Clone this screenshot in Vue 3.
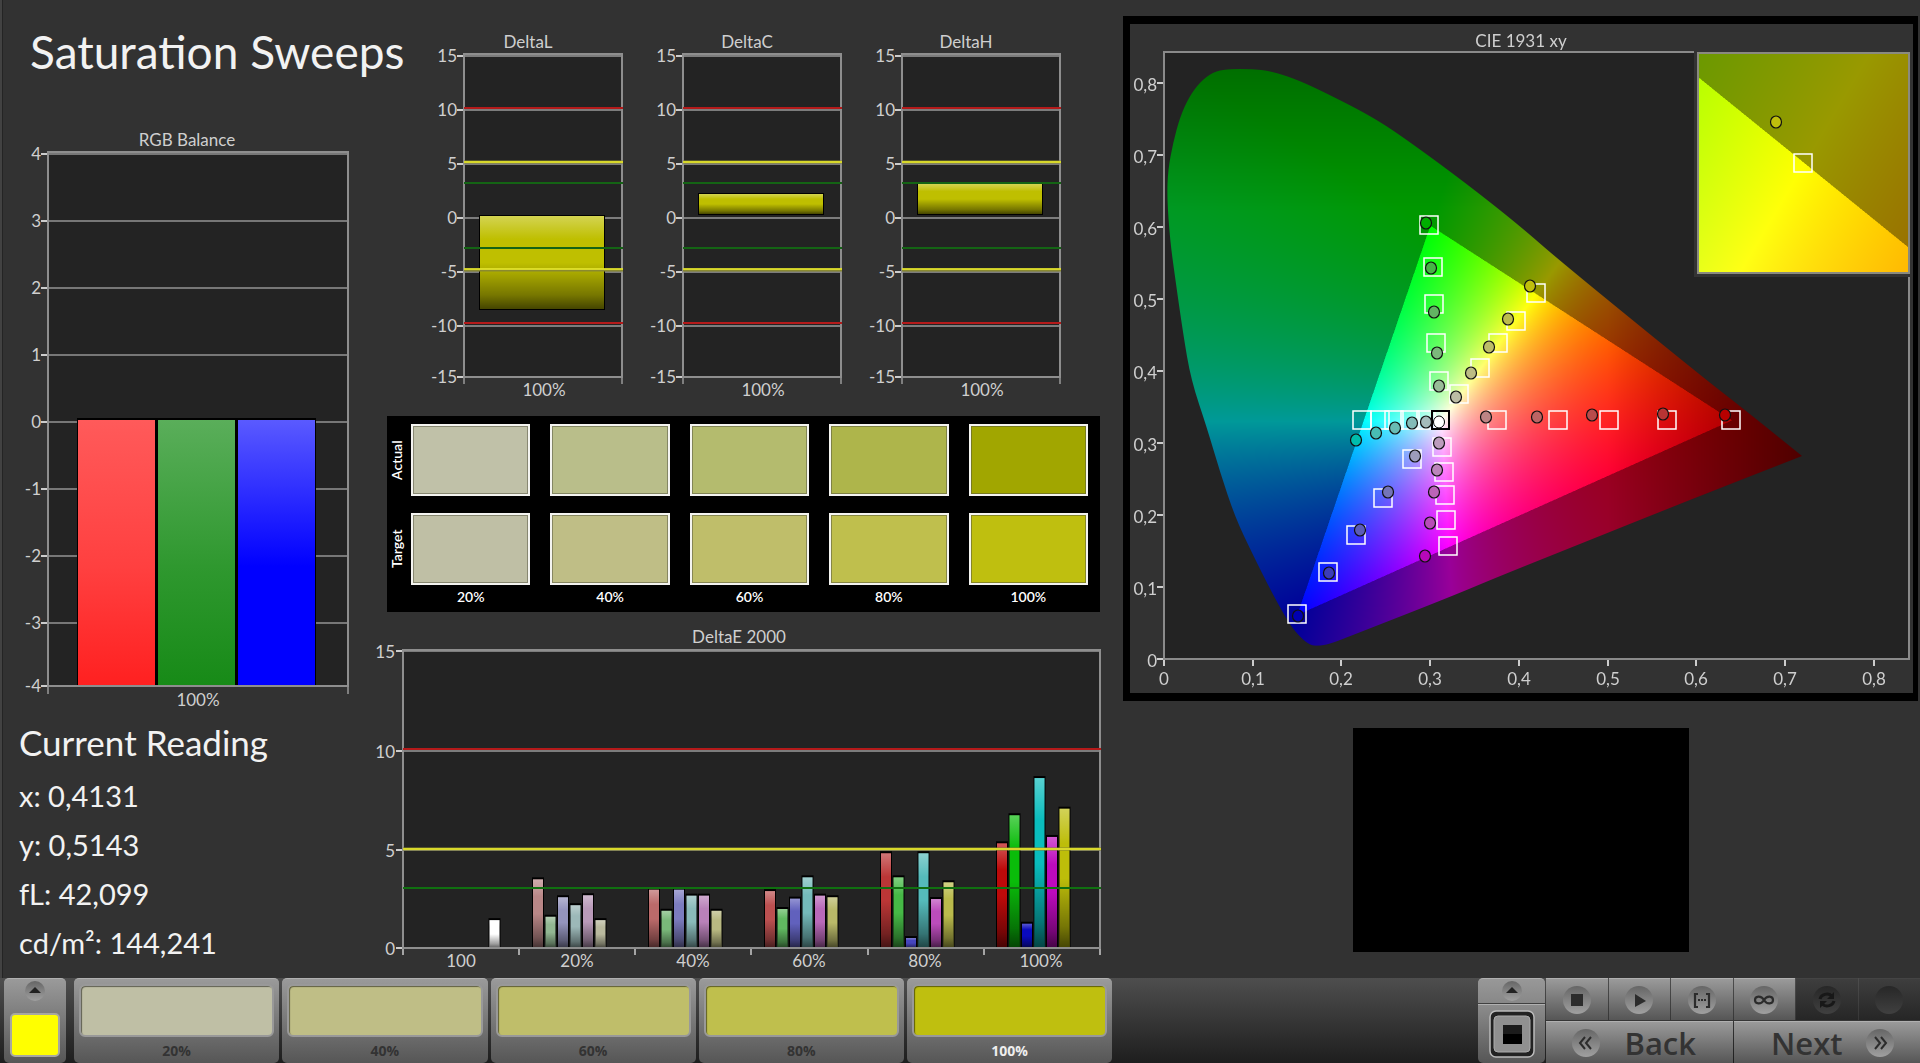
<script setup>
import { onMounted, ref } from 'vue'

/* RGB balance */
const rgbTicks = [4, 3, 2, 1, 0, -1, -2, -3, -4].map((v, i) => ({ v, y: i === 8 ? 562 : 30 + i * 67 }))
const rgbBars = [
  { x: 77, from: '#ff5a5a', mid: '#ff4040', to: '#ff2020' },
  { x: 157, from: '#5aae5a', mid: '#2f982f', to: '#178a17' },
  { x: 237, from: '#5a5aff', mid: '#0000ff', to: '#0000ff' },
]

/* Delta L / C / H */
const deltaTicks = [15, 10, 5, 0, -5, -10, -15].map((v, i) => ({ v, y: i === 6 ? 349 : 28 + i * 54 }))
const deltaCharts = [
  { title: 'DeltaL', top: 187, height: 95 },
  { title: 'DeltaC', top: 165, height: 22 },
  { title: 'DeltaH', top: 155, height: 32 },
]

/* Swatches */
const levels = ['20%', '40%', '60%', '80%', '100%']
const actual = ['#c0c1a8', '#b9be8a', '#b4bb6e', '#aeb54b', '#a1a600']
const target = ['#bfbfa5', '#bfbe86', '#bfbe6a', '#bfbf4d', '#bfbf0f']

/* Delta E 2000 */
const groups = [
  { label: '100', values: [[5.8, 1.5, '#ffffff']] },
  { label: '20%', values: [[0, 3.55, '#b98787'], [1, 1.67, '#92b792'], [2, 2.65, '#9494bd'], [3, 2.25, '#9cb8b8'], [4, 2.75, '#b99ab9'], [5, 1.5, '#b9b99e']] },
  { label: '40%', values: [[0, 3.03, '#bb6a6a'], [1, 1.97, '#7ab87a'], [2, 3.03, '#7c7cbf'], [3, 2.73, '#8ababa'], [4, 2.73, '#b981b9'], [5, 1.97, '#b9b982']] },
  { label: '60%', values: [[0, 2.96, '#bb5050'], [1, 2.06, '#60b860'], [2, 2.58, '#6161bd'], [3, 3.65, '#74baba'], [4, 2.73, '#b969b9'], [5, 2.65, '#b9b969']] },
  { label: '80%', values: [[0, 4.86, '#bb3636'], [1, 3.65, '#46b946'], [2, 0.6, '#4646be'], [3, 4.86, '#55bbbb'], [4, 2.56, '#bb4cbb'], [5, 3.4, '#bbbb4c']] },
  { label: '100%', values: [[0, 5.36, '#bd0a0a'], [1, 6.77, '#0abc0a'], [2, 1.32, '#0a0abd'], [3, 8.64, '#0abdbd'], [4, 5.68, '#bd0abd'], [5, 7.1, '#bdbd0a']] },
]
const eBars = groups.flatMap((g, k) =>
  g.values.map(([slot, v, color]) => ({ x: 41 + 116 * k + slot * 12.5, y: 328 - v * 19.9, h: v * 19.9, color }))
)
const eTicks = [[15, 31], [10, 131], [5, 230], [0, 328]]

/* CIE chart: marker positions on the 783 x 669 drawing */
const targets = [
  [299, 201], [303, 243], [304, 280], [306, 319], [309, 357],
  [406, 269], [386, 297], [368, 319], [350, 344], [329, 370],
  [367, 396], [428, 396], [479, 396], [537, 396], [601, 396],
  [232, 396], [250, 396], [264, 396], [280, 396], [296, 396],
  [312, 423], [314, 448], [315, 471], [316, 496], [318, 522],
  [282, 435], [253, 474], [226, 511], [198, 548], [167, 590],
  [673, 139],
]
const readings = [
  [296, 199, '#00ae00'], [301, 244, '#46b446'], [304, 288, '#62b462'], [307, 329, '#7cb87c'], [309, 362, '#98bc98'],
  [400, 262, '#bfbf0c'], [378, 295, '#bcbc4c'], [359, 323, '#bcbc68'], [341, 349, '#bcbc84'], [326, 373, '#bcbca4'],
  [356, 393, '#bc8484'], [407, 393, '#bc6464'], [462, 391, '#b84c4c'], [533, 390, '#b83434'], [595, 391, '#b80000'],
  [296, 398, '#a4bcbc'], [282, 399, '#84bcb8'], [265, 404, '#68bcb4'], [246, 409, '#48bcb4'], [226, 416, '#00bcac'],
  [309, 419, '#bc9cbc'], [307, 446, '#bc84bc'], [304, 468, '#bc64b8'], [300, 499, '#b84cb8'], [295, 532, '#b808b8'],
  [285, 432, '#9c9cbc'], [258, 468, '#7474b8'], [230, 506, '#5c5cb8'], [199, 549, '#3c3cb8'], [168, 592, '#0000b0'],
  [646, 98, '#bfbf0c'],
]
const xAxis = [0, 1, 2, 3, 4, 5, 6, 7, 8].map((n) => ({ label: n ? '0,' + n : '0', p: Math.round(34 + n * 88.7) }))
const yAxis = [0, 1, 2, 3, 4, 5, 6, 7, 8].map((n) => ({ label: n ? '0,' + n : '0', p: Math.round(635 - n * 72) }))

const locus = [
  [97, 45], [123, 45], [140, 47], [163, 54], [190, 66], [243, 93], [280, 118], [337, 160], [390, 202],
  [430, 237], [570, 351], [615, 386], [672, 432], [557, 477], [440, 524], [370, 552], [320, 573], [223, 611],
  [200, 620], [188, 622], [180, 621], [171, 614], [160, 601], [142, 569], [122, 529], [105, 493], [90, 448],
  [77, 404], [61, 356], [53, 309], [45, 253], [40, 216], [37, 173], [38, 146], [43, 119], [50, 93], [59, 73],
  [70, 58], [83, 48],
]

const gamut = ref(null)

function chroma(x, y) {
  if (y < 0.002) y = 0.002
  const X = x / y
  const Z = (1 - x - y) / y
  let r = 3.2406 * X - 1.5372 - 0.4986 * Z
  let g = -0.9689 * X + 1.8758 + 0.0415 * Z
  let b = 0.0557 * X - 0.204 + 1.057 * Z
  let k = Math.min(r, g, b) < 0 ? 0.6 : 1
  if (x > 0.5) k *= 1 - (x - 0.5) * 2.2
  if (y > 0.62) k *= 1 - (y - 0.62) * 1.4
  r = Math.max(r, 0)
  g = Math.max(g, 0)
  b = Math.max(b, 0)
  k *= 255 / Math.max(r, g, b)
  return [r * k, g * k, b * k]
}

function shade(w, h, toXY) {
  const c = document.createElement('canvas')
  c.width = w
  c.height = h
  const ctx = c.getContext('2d')
  const img = ctx.createImageData(w, h)
  for (let j = 0; j < h; j++) {
    for (let i = 0; i < w; i++) {
      const [x, y] = toXY(i / 2, j / 2)
      const [r, g, b] = chroma(x, y)
      const o = (j * w + i) * 4
      img.data[o] = r
      img.data[o + 1] = g
      img.data[o + 2] = b
      img.data[o + 3] = 255
    }
  }
  ctx.putImageData(img, 0, 0)
  return c
}

onMounted(() => {
  const ctx = gamut.value.getContext('2d')
  ctx.scale(2, 2)
  ctx.fillStyle = '#232323'
  ctx.fillRect(34, 28, 745, 607)

  ctx.save()
  ctx.beginPath()
  const n = locus.length
  const mid = (a, b) => [(a[0] + b[0]) / 2, (a[1] + b[1]) / 2]
  ctx.moveTo(...mid(locus[n - 1], locus[0]))
  for (let i = 0; i < n; i++) {
    const p = locus[i]
    const m = mid(p, locus[(i + 1) % n])
    if (p[0] === 672) {
      ctx.lineTo(...p)
      ctx.lineTo(...m)
    } else {
      ctx.quadraticCurveTo(...p, ...m)
    }
  }
  ctx.clip()
  ctx.drawImage(shade(1490, 1214, (px, py) => [px / 887, (606 - py) / 721]), 34, 28, 745, 607)
  ctx.restore()

  ctx.fillStyle = '#333333'
  ctx.fillRect(564, 26, 219, 227)
  ctx.drawImage(
    shade(422, 440, (px, py) => [0.419 + (px - 105) / 4460, 0.5055 - (py - 109) / 4550]),
    568, 29, 211, 220
  )
})
</script>

<template>
  <div class="shell">
    <main class="report">
      <section class="col-left">
        <h1>Saturation Sweeps</h1>
        <svg class="chart" viewBox="0 0 375 590" role="img" aria-label="RGB Balance">
          <defs>
            <linearGradient v-for="(b, i) in rgbBars" :id="'rgb' + i" :key="i" x1="0" y1="0" x2="0" y2="1">
              <stop offset="0" :stop-color="b.from" />
              <stop offset="0.55" :stop-color="b.mid" />
              <stop offset="1" :stop-color="b.to" />
            </linearGradient>
          </defs>
          <text x="187" y="22" text-anchor="middle">RGB Balance</text>
          <rect x="48" y="28" width="300" height="534" fill="#232323" />
          <g v-for="t in rgbTicks" :key="t.v">
            <path :d="`M48 ${t.y}H348`" stroke="#777" stroke-width="2" />
            <path :d="`M41 ${t.y}H47`" stroke="#ccc" stroke-width="2" />
            <text x="41" :y="t.y + 6" text-anchor="end">{{ t.v }}</text>
          </g>
          <rect x="77" y="294" width="239" height="268" fill="#000" />
          <rect v-for="(b, i) in rgbBars" :key="b.x" :x="b.x + 1" y="296" width="77" height="266" :fill="`url(#rgb${i})`" />
          <rect x="48" y="28" width="300" height="534" fill="none" stroke="#8e8e8e" stroke-width="2" />
          <path d="M48 563V570M348 563V570" stroke="#ccc" stroke-width="1" />
          <text x="198" y="582" text-anchor="middle">100%</text>
        </svg>
        <div class="reading">
          <h2>Current Reading</h2>
          <p>x: 0,4131</p>
          <p>y: 0,5143</p>
          <p>fL: 42,099</p>
          <p>cd/m²: 144,241</p>
        </div>
      </section>

      <section class="col-mid">
        <div class="deltas">
          <svg v-for="c in deltaCharts" :key="c.title" class="chart" viewBox="0 0 219 378" role="img" :aria-label="c.title">
            <defs>
              <linearGradient id="gloss" x1="0" y1="0" x2="0" y2="1">
                <stop offset="0" stop-color="#fff" stop-opacity="0.32" />
                <stop offset="0.25" stop-color="#fff" stop-opacity="0" />
                <stop offset="0.5" stop-color="#000" stop-opacity="0" />
                <stop offset="0.85" stop-color="#000" stop-opacity="0.38" />
                <stop offset="1" stop-color="#000" stop-opacity="0.64" />
              </linearGradient>
            </defs>
            <text x="96" y="20" text-anchor="middle">{{ c.title }}</text>
            <rect x="32" y="26" width="158" height="323" fill="#232323" />
            <g v-for="t in deltaTicks" :key="t.v">
              <path :d="`M32 ${t.y}H190`" stroke="#7c7c7c" stroke-width="2" />
              <path :d="`M25 ${t.y}H31`" stroke="#ccc" stroke-width="2" />
              <text x="25" :y="t.y + 6" text-anchor="end">{{ t.v }}</text>
            </g>
            <rect x="32" y="26" width="158" height="323" fill="none" stroke="#8e8e8e" stroke-width="2" />
            <rect x="47" :y="c.top" width="126" :height="c.height" fill="#000" />
            <rect x="48" :y="c.top + 1" width="124" :height="c.height - 2" fill="#bfbf00" />
            <rect x="48" :y="c.top + 1" width="124" :height="c.height - 2" fill="url(#gloss)" />
            <path d="M32 80H191M32 295H191" stroke="#b41a1a" stroke-width="2" />
            <path d="M32 134H191M32 242H191" stroke="#8a8a30" stroke-width="3" />
            <path d="M32 134H191M32 241H191" stroke="#f2f22a" stroke-width="1.5" />
            <path d="M32 155H191M32 220H191" stroke="#146414" stroke-width="2" />
            <path d="M32 350V356M190 350V356" stroke="#ccc" stroke-width="1" />
            <text x="112" y="368" text-anchor="middle">100%</text>
          </svg>
        </div>

        <div class="swatches">
          <span class="side">Actual</span>
          <i v-for="c in actual" :key="c" class="patch" :style="{ background: c }"></i>
          <span class="side">Target</span>
          <i v-for="c in target" :key="c" class="patch" :style="{ background: c }"></i>
          <span></span>
          <span v-for="l in levels" :key="l" class="level">{{ l }}</span>
        </div>

        <svg class="chart delta-e" viewBox="0 0 737 358" role="img" aria-label="DeltaE 2000">
          <text x="364" y="23" text-anchor="middle">DeltaE 2000</text>
          <rect x="28" y="30" width="697" height="298" fill="#232323" />
          <g v-for="[v, y] in eTicks" :key="v">
            <path :d="`M28 ${y}H725`" stroke="#7c7c7c" stroke-width="2" />
            <path :d="`M21 ${y}H27`" stroke="#ccc" stroke-width="2" />
            <text x="20" :y="y + 7" text-anchor="end">{{ v }}</text>
          </g>
          <g v-for="(b, i) in eBars" :key="i">
            <rect :x="b.x" :y="b.y" width="12" :height="b.h" fill="#000" />
            <rect :x="b.x + 1" :y="b.y + 2" width="10" :height="b.h - 2" :fill="b.color" />
            <rect :x="b.x + 1" :y="b.y + 2" width="10" :height="b.h - 2" fill="url(#gloss)" />
          </g>
          <rect x="28" y="30" width="697" height="298" fill="none" stroke="#8e8e8e" stroke-width="2" />
          <path d="M28 129H726" stroke="#b41a1a" stroke-width="2" />
          <path d="M28 229H726" stroke="#8a8a30" stroke-width="3" />
          <path d="M28 229H726" stroke="#f2f22a" stroke-width="1.5" />
          <path d="M28 268H726" stroke="#107010" stroke-width="2" />
          <path d="M28 329V335M144 329V335M260 329V335M376 329V335M493 329V335M609 329V335M725 329V335" stroke="#ccc" stroke-width="1.5" />
          <text v-for="(g, k) in groups" :key="g.label + k" :x="86 + k * 116" y="347" text-anchor="middle">{{ g.label }}</text>
        </svg>
      </section>

      <section class="col-right">
        <div class="cie">
          <canvas ref="gamut" width="1566" height="1338"></canvas>
          <svg class="chart" viewBox="0 0 783 669" role="img" aria-label="CIE 1931 xy">
            <text x="391" y="23" text-anchor="middle">CIE 1931 xy</text>
            <path d="M564 28H34V635H779V253" fill="none" stroke="#8a8a8a" stroke-width="2" />
            <rect x="568" y="29" width="211" height="220" fill="none" stroke="#8a8a80" stroke-width="2" />
            <g v-for="t in xAxis" :key="'x' + t.label">
              <path :d="`M${t.p} 636V642`" stroke="#ccc" stroke-width="2" />
              <text :x="t.p" y="661" text-anchor="middle">{{ t.label }}</text>
            </g>
            <g v-for="t in yAxis" :key="'y' + t.label">
              <path :d="`M27 ${t.p}H33`" stroke="#ccc" stroke-width="2" />
              <text x="27" :y="t.p + 8" text-anchor="end">{{ t.label }}</text>
            </g>
            <rect v-for="([x, y], i) in targets" :key="'t' + i" :x="x - 9" :y="y - 9" width="18" height="18" fill="none" stroke="#fff" stroke-width="1.5" />
            <rect x="302" y="387" width="17" height="18" fill="none" stroke="#000" stroke-width="2" />
            <ellipse v-for="([x, y, c], i) in readings" :key="'r' + i" :cx="x" :cy="y" rx="5.5" ry="6" :fill="c" stroke="#111" stroke-width="1.2" />
            <ellipse cx="309" cy="398" rx="5.5" ry="6" fill="#fff" stroke="#000" />
          </svg>
        </div>
        <div class="preview"></div>
      </section>
    </main>

    <footer class="bar">
      <button class="key current" aria-label="Select colour">
        <svg class="knob" viewBox="0 0 20 20"><circle cx="10" cy="10" r="10" fill="url(#dish)" /><path d="M4 12L10 6L16 12Z" fill="#222" /></svg>
        <span class="chip"></span>
      </button>
      <div class="steps">
        <button v-for="(l, i) in levels" :key="l" class="key step" :class="{ active: i === 4 }">
          <span class="fill" :style="{ background: target[i] }"></span>
          <span>{{ l }}</span>
        </button>
      </div>
      <div class="spacer"></div>
      <div class="pattern">
        <button class="key up" aria-label="Open patterns">
          <svg class="knob" viewBox="0 0 20 20"><circle cx="10" cy="10" r="10" fill="url(#dish)" /><path d="M4 12L10 6L16 12Z" fill="#222" /></svg>
        </button>
        <button class="key window" aria-label="Window pattern">
          <svg viewBox="0 0 46 48" width="46" height="48">
            <rect x="1" y="1" width="44" height="46" rx="6" fill="#222" stroke="#bbb" stroke-width="1.5" />
            <rect x="5" y="6" width="36" height="36" rx="4" fill="#909090" stroke="#aaa" />
            <rect x="14" y="15" width="19" height="19" fill="#000" />
            <rect x="14" y="15" width="19" height="9" fill="#1c1c1c" />
          </svg>
        </button>
      </div>
      <div class="controls">
        <svg class="defs" width="0" height="0">
          <defs>
            <linearGradient id="dish" x1="0" y1="0" x2="0" y2="1">
              <stop offset="0" stop-color="#666" />
              <stop offset="1" stop-color="#a0a0a0" />
            </linearGradient>
            <linearGradient id="dishOff" x1="0" y1="0" x2="0" y2="1">
              <stop offset="0" stop-color="#272727" />
              <stop offset="1" stop-color="#404040" />
            </linearGradient>
          </defs>
        </svg>
        <div class="transport">
          <button class="key" aria-label="Stop">
            <svg viewBox="0 0 28 28"><circle cx="14" cy="14" r="14" fill="url(#dish)" /><rect x="8" y="8" width="12" height="12" fill="#2c2c2c" /></svg>
          </button>
          <button class="key" aria-label="Play">
            <svg viewBox="0 0 28 28"><circle cx="14" cy="14" r="14" fill="url(#dish)" /><path d="M10 8L21 15L10 21Z" fill="#2c2c2c" /></svg>
          </button>
          <button class="key" aria-label="Read range">
            <svg viewBox="0 0 28 28"><circle cx="14" cy="14" r="14" fill="url(#dish)" /><path d="M10 8H7V21H10M18 8H21V21H18" fill="none" stroke="#2c2c2c" stroke-width="2.2" /><path d="M10 14H12M13 14H15M16 14H18" stroke="#2c2c2c" stroke-width="2" /></svg>
          </button>
          <button class="key" aria-label="Read continuously">
            <svg viewBox="0 0 28 28"><circle cx="14" cy="14" r="14" fill="url(#dish)" /><path d="M14 14C11 9 5 10 5 14S11 19 14 14S23 10 23 14S17 19 14 14Z" fill="none" stroke="#2c2c2c" stroke-width="2.2" /></svg>
          </button>
          <button class="key off" aria-label="Refresh" disabled>
            <svg viewBox="0 0 28 28"><circle cx="14" cy="14" r="14" fill="url(#dishOff)" /><path d="M7 13A7 6 0 0 1 19 10M21 15A7 6 0 0 1 9 18" fill="none" stroke="#181818" stroke-width="3" /><path d="M21 6V13H14ZM7 22V15H14Z" fill="#181818" /></svg>
          </button>
          <button class="key off" aria-label="Record" disabled>
            <svg viewBox="0 0 28 28"><circle cx="14" cy="14" r="14" fill="url(#dishOff)" /></svg>
          </button>
        </div>
        <div class="nav">
          <button class="key back">
            <svg viewBox="0 0 28 28"><circle cx="14" cy="14" r="14" fill="url(#dish)" /><path d="M13 8L8 14L13 20M19 8L14 14L19 20" fill="none" stroke="#2c2c2c" stroke-width="2" /></svg>
            <span>Back</span>
          </button>
          <button class="key next">
            <span>Next</span>
            <svg viewBox="0 0 28 28"><circle cx="14" cy="14" r="14" fill="url(#dish)" /><path d="M9 8L14 14L9 20M15 8L20 14L15 20" fill="none" stroke="#2c2c2c" stroke-width="2" /></svg>
          </button>
        </div>
      </div>
    </footer>
  </div>
</template>

<style>
body {
  margin: 0;
  background: #323232;
}
</style>

<style scoped>
.shell {
  min-height: 100vh;
  display: flex;
  flex-direction: column;
  background: #323232;
  box-shadow: inset 2px 0 #424242, inset 3px 0 #242424;
  color: #f2f2f2;
  font-family: Lato, Carlito, sans-serif;
  overflow: hidden;
}
.report {
  flex: 1;
  display: grid;
  grid-template-columns: minmax(0, 375fr) minmax(0, 737fr) minmax(0, 808fr);
  align-items: start;
}
.chart {
  display: block;
  width: 100%;
  height: auto;
  overflow: visible;
}
.chart text {
  font-size: 17px;
  fill: #cfcfcf;
}
h1, h2, p {
  margin: 0;
  font-weight: 400;
  white-space: nowrap;
}
h1 {
  padding: 23px 0 43px 30px;
  font-size: 46px;
  line-height: 58px;
}
.reading {
  padding-left: 19px;
}
h2 {
  padding: 4px 0 5px;
  font-size: 35px;
  line-height: 48px;
}
p {
  font-size: 29px;
  line-height: 49px;
}
.deltas {
  display: grid;
  grid-template-columns: repeat(3, 1fr);
  padding: 28px 23px 0 57px;
}
.swatches {
  display: grid;
  grid-template-columns: 4px repeat(5, 1fr);
  grid-template-rows: 72px 72px 16px;
  column-gap: 20px;
  row-gap: 17px;
  margin: 10px 12px 8px;
  height: 188px;
  padding: 8px 12px 0 0;
  background: #000;
  color: #fff;
  font-size: 14px;
}
.side {
  writing-mode: vertical-rl;
  transform: rotate(180deg);
  width: 20px;
  line-height: 20px;
  text-align: center;
  font-weight: 600;
}
.patch {
  border: 2px solid #f4f4f0;
  box-shadow: inset 0 0 0 1px rgba(80, 80, 60, 0.5);
}
.level {
  text-align: center;
  line-height: 16px;
  margin-top: -13px;
  font-weight: 600;
}
.delta-e {
  margin-top: 8px;
}
.col-right {
  padding: 16px 2px 0 11px;
}
.cie {
  display: grid;
  border: solid #000;
  border-width: 8px 5px 8px 7px;
}
.cie > * {
  grid-area: 1 / 1;
  width: 100%;
  height: auto;
}
.preview {
  width: 336px;
  max-width: 100%;
  aspect-ratio: 336 / 224;
  margin: 27px auto 0;
  background: #000;
}
.bar {
  display: grid;
  grid-template-columns: 62px 1047fr 366fr 67px 375px;
  height: 85px;
  padding-left: 4px;
  background: linear-gradient(#4e4e4e, #1e1e1e);
}
.key {
  margin: 0;
  padding: 0;
  border: 0;
  border-top: 1px solid #b0b0b0;
  background: linear-gradient(#9a9a9a, #565656);
  color: #333;
  font-family: "Open Sans", "Noto Sans", sans-serif;
  display: flex;
  align-items: center;
  justify-content: center;
}
.current {
  flex-direction: column;
  justify-content: space-between;
  border-radius: 5px;
  padding: 2px 6px 6px;
}
.knob {
  width: 20px;
  height: 20px;
}
.chip {
  width: 46px;
  height: 40px;
  border: 2px solid #a8a8a0;
  border-radius: 5px;
  background: #ffff00;
}
.steps {
  display: grid;
  grid-template-columns: repeat(5, 1fr);
  gap: 3px;
  padding-left: 8px;
}
.step {
  flex-direction: column;
  justify-content: flex-start;
  gap: 4px;
  padding: 5px 5px 0;
  border-radius: 5px;
  font-size: 14px;
  font-weight: 700;
  line-height: 20px;
}
.fill {
  align-self: stretch;
  height: 49px;
  border: 2px solid #999;
  border-radius: 6px;
  box-shadow: inset 1px 1px 1px rgba(0, 0, 0, 0.5);
}
.active {
  color: #eee;
}
.pattern {
  display: grid;
  grid-template-rows: 25px 1fr;
  gap: 1px;
}
.up {
  border-radius: 5px 5px 0 0;
  background: linear-gradient(#989898, #888);
}
.window {
  border-radius: 0 0 5px 5px;
  background: linear-gradient(#8c8c8c, #565656);
}
.controls {
  display: grid;
  grid-template-rows: 42px 42px;
  gap: 1px;
  padding-left: 1px;
}
.defs {
  position: absolute;
}
.transport {
  display: grid;
  grid-template-columns: repeat(6, 1fr);
  gap: 1px;
}
.transport svg, .nav svg {
  width: 28px;
  height: 28px;
}
.off {
  border-top-color: #444;
  background: linear-gradient(#3e3e3e, #262626);
}
.nav {
  display: grid;
  grid-template-columns: 1fr 1fr;
  gap: 1px;
}
.nav .key {
  gap: 24px;
  font-size: 31px;
  font-weight: 600;
  line-height: 36px;
}
.nav .back {
  padding-right: 10px;
}
.nav .next {
  padding-left: 12px;
}
</style>
